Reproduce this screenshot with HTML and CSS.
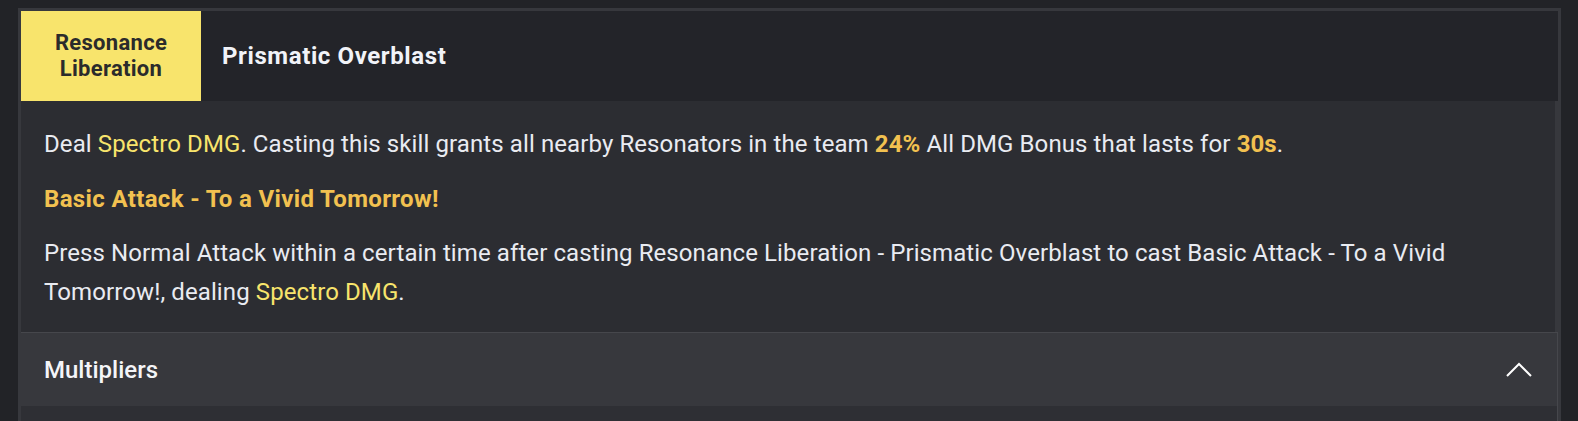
FILE: index.html
```html
<!DOCTYPE html>
<html lang="en">
<head>
<meta charset="utf-8">
<title>Prismatic Overblast</title>
<link rel="stylesheet" href="styles.css">
</head>
<body>
<div class="frame">
  <div class="header">
    <div class="tab">Resonance<br>Liberation</div>
    <div class="title">Prismatic Overblast</div>
  </div>
  <div class="body">
    <p class="para first">Deal <span class="spectro">Spectro DMG</span>. Casting this skill grants all nearby Resonators in the team <span class="num">24%</span> All DMG Bonus that lasts for <span class="num">30s</span>.</p>
    <p class="para sub">Basic Attack - To a Vivid Tomorrow!</p>
    <p class="para last">Press Normal Attack within a certain time after casting Resonance Liberation - Prismatic Overblast to cast Basic Attack - To a Vivid Tomorrow!, dealing <span class="spectro">Spectro DMG</span>.</p>
    <div class="mult">
      <div class="mult-head">
        <span class="mult-title">Multipliers</span>
        <svg class="chev" width="26" height="15" viewBox="0 0 26 15"><path d="M1 14 L13 2 L25 14" fill="none" stroke="#ffffff" stroke-width="2"/></svg>
      </div>
      <div class="mult-body"></div>
    </div>
  </div>
</div>
</body>
</html>
```
FILE: styles.css
```css
html, body {
  margin: 0;
  padding: 0;
  background: #222327;
  font-family: Roboto, "Noto Sans", "Liberation Sans", sans-serif;
  color: #e9ebf1;
}
.frame {
  margin: 8px 17px 0 18px;
  padding: 3px 3px 0 3px;
  background: #37383d;
}
.header {
  display: flex;
  height: 90px;
  background: #232429;
}
.tab {
  width: 180px;
  background: #f8e46c;
  color: #2b2b2b;
  font-weight: 700;
  font-size: 22px;
  line-height: 26px;
  letter-spacing: 0.3px;
  text-align: center;
  display: flex;
  align-items: center;
  justify-content: center;
}
.title {
  display: flex;
  align-items: center;
  padding-left: 21px;
  font-weight: 700;
  font-size: 24px;
  letter-spacing: 0.6px;
  color: #f1f3f8;
}
.body {
  background: #2c2d32;
  margin-right: 3px;
  padding-top: 24px;
}
.para {
  margin: 0;
  padding: 0 23px;
  font-size: 24px;
  line-height: 39px;
  letter-spacing: 0.1px;
}
.para.first { margin-bottom: 16px; }
.para.sub { margin-bottom: 15px; letter-spacing: 0.35px; }
.spectro { color: #f8e46c; }
.num { color: #f2c150; font-weight: 700; }
.sub { color: #f2c150; font-weight: 700; }
.mult {
  margin-top: 20px;
  margin-right: -3px;
  border-top: 1px solid #46474c;
  border-right: 1px solid #46474c;
}
.mult-head {
  height: 73px;
  background: #37383d;
  display: flex;
  align-items: center;
  justify-content: space-between;
  padding: 0 25px 0 23px;
}
.mult-title {
  font-size: 24px;
  font-weight: 500;
  color: #f4f5f8;
}
.chev { display: block; }
.mult-body {
  height: 40px;
  background: #2e2f34;
}
```
